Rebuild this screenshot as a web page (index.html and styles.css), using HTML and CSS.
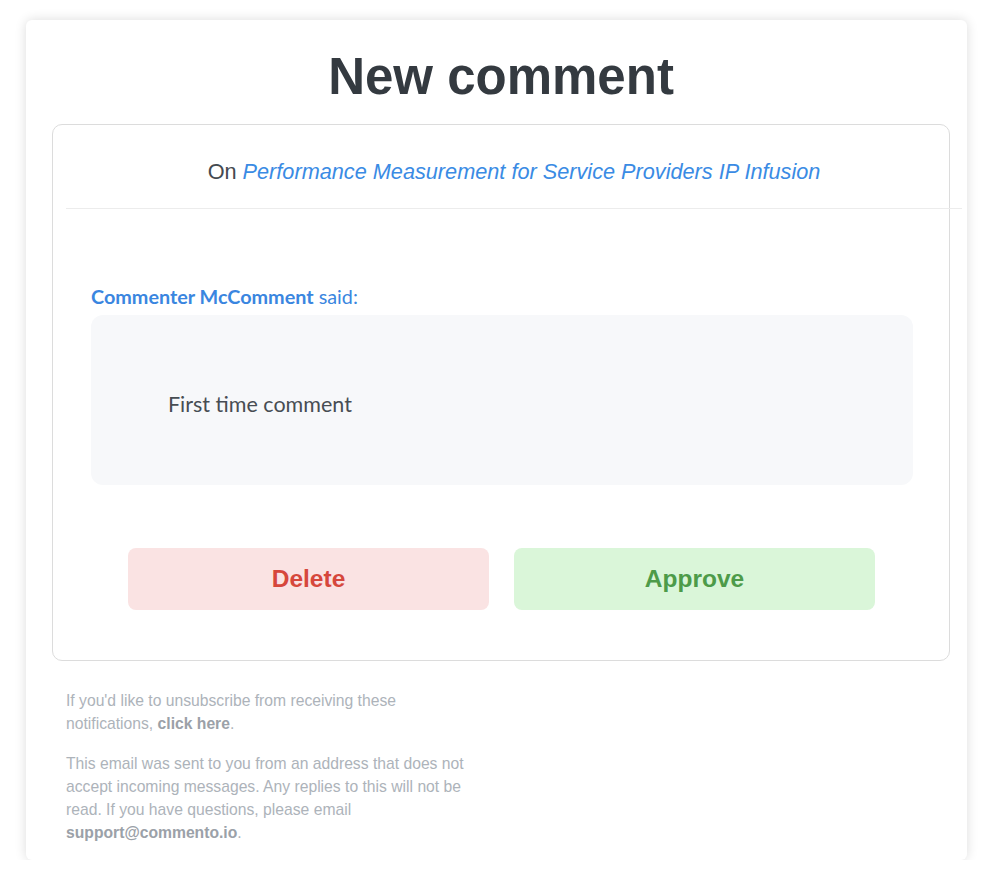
FILE: index.html
```html
<!DOCTYPE html>
<html>
<head>
    <title>New comment</title>
    <link rel="stylesheet" href="styles.css">
</head>
<body>

<div class="mail">
    <h1 class="title">New comment</h1>

    <div class="panel">
        <div class="panel-head">
            On <a class="page-link" href="#">Performance Measurement for Service Providers IP Infusion</a>
        </div>

        <div class="panel-body">
            <div class="author"><b>Commenter McComment</b> said:</div>
            <div class="comment">First time comment</div>
        </div>

        <div class="actions">
            <a class="btn btn-delete" href="#">Delete</a>
            <a class="btn btn-approve" href="#">Approve</a>
        </div>
    </div>

    <div class="footer">
        <p>If you'd like to unsubscribe from receiving these notifications, <b>click here</b>.</p>
        <p>This email was sent to you from an address that does not accept incoming messages. Any replies to this will not be read. If you have questions, please email <b>support@commento.io</b>.</p>
    </div>
</div>

</body>
</html>
```

FILE: styles.css
```css
body {
    margin: 0;
    background-color: #fff;
    font-family: "Liberation Sans", Arial, sans-serif;
}
.mail {
    width: 898px;
    margin: 20px 0 0 26px;
    padding: 0 17px 16px 26px;
    border-radius: 6px;
    box-shadow: 0 0 12px rgba(0, 0, 0, 0.14);
    background-color: #fff;
}
.title {
    margin: 0;
    padding: 29px 0 20px;
    font-size: 51px;
    line-height: 55px;
    font-weight: bold;
    text-align: center;
    color: #343a40;
}
.panel {
    border: 1px solid #dcdcdc;
    border-radius: 10px;
    padding-bottom: 50px;
}
.panel-head {
    margin: 0 -13px 0 13px;
    padding: 35px 0 24px;
    border-bottom: 1px solid #ececec;
    font-size: 21.7px;
    line-height: 24px;
    text-align: center;
    color: #444a50;
}
.page-link {
    color: #3a8be4;
    font-style: italic;
    text-decoration: none;
}
.panel-body {
    padding: 75px 36px 0 38px;
    font-family: Lato, "Open Sans", sans-serif;
}
.author {
    font-size: 19.8px;
    line-height: 24px;
    color: #3a86e0;
    margin-bottom: 7px;
}
.author b {
    font-weight: bold;
}
.comment {
    display: flex;
    align-items: center;
    height: 163px;
    padding: 7px 77px 0;
    border-radius: 12px;
    background-color: #f7f8fa;
    font-size: 21.5px;
    color: #474d53;
}
.actions {
    display: flex;
    gap: 25px;
    padding: 63px 74px 0 75px;
}
.btn {
    flex: 1;
    height: 62px;
    line-height: 62px;
    border-radius: 8px;
    font-size: 24.5px;
    font-weight: bold;
    text-align: center;
    text-decoration: none;
}
.btn-delete {
    background-color: #fae3e3;
    color: #d6473c;
}
.btn-approve {
    background-color: #daf6d9;
    color: #4d9b49;
}
.footer {
    width: 420px;
    padding: 28px 0 0 14px;
    font-size: 15.7px;
    line-height: 23px;
    color: #adb3ba;
}
.footer p {
    margin: 0;
}
.footer p + p {
    margin-top: 17px;
}
.footer b {
    color: #9ba1a8;
}
```
